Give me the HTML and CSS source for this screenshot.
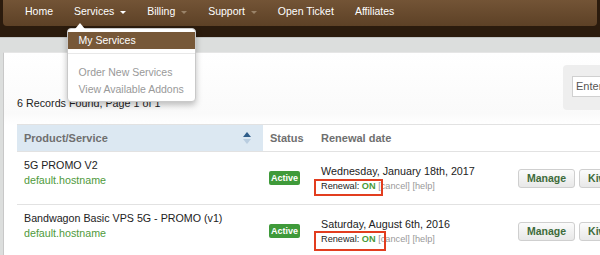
FILE: index.html
```html
<!DOCTYPE html>
<html lang="en">

<head>
    <meta charset="UTF-8">
    <meta name="viewport" content="width=device-width, initial-scale=1.0">
    <title>My Services</title>
    <link rel="stylesheet" href="styles.css">
</head>

<body>
    <div class="header">
        <ul class="navbar">
            <li class="nav-item">Home</li>
            <li class="nav-item open">Services <span class="caret"></span>
                <!-- Services dropdown -->
                <div class="dropdown">
                    <div class="dropdown-item active">My Services</div>
                    <div class="divider"></div>
                    <div class="dropdown-item">Order New Services</div>
                    <div class="dropdown-item">View Available Addons</div>
                </div>
            </li>
            <li class="nav-item">Billing <span class="caret faint"></span></li>
            <li class="nav-item">Support <span class="caret faint"></span></li>
            <li class="nav-item">Open Ticket</li>
            <li class="nav-item">Affiliates</li>
        </ul>
    </div>

    <div class="strip"></div>

    <div class="panel">
        <div class="toolbar">
            <div class="records">6 Records Found, Page 1 of 1</div>
            <div class="search">
                <div class="search-input">Enter</div>
            </div>
        </div>

        <table class="services">
            <thead>
                <tr>
                    <th class="col-product sorted">Product/Service
                        <span class="sort">
                            <svg width="8" height="12" viewBox="0 0 8 12">
                                <path d="M4 0 L8 5 L0 5 Z" fill="#2f5d8a" />
                                <path d="M4 12 L8 7 L0 7 Z" fill="#b9cde0" />
                            </svg>
                        </span>
                    </th>
                    <th class="col-status">Status</th>
                    <th class="col-renewal">Renewal date</th>
                    <th class="col-actions"></th>
                </tr>
            </thead>
            <tbody>
                <tr>
                    <td class="product">
                        <div class="name">5G PROMO V2</div>
                        <div class="host">default.hostname</div>
                    </td>
                    <td class="status"><span class="badge">Active</span></td>
                    <td class="renewal">
                        <div class="date">Wednesday, January 18th, 2017</div>
                        <div class="renew">Renewal: <b>ON</b> <span class="muted">[cancel] [help]</span></div>
                        <div class="mark"></div>
                    </td>
                    <td class="actions">
                        <span class="btn">Manage</span><span class="btn">Kiwi</span>
                    </td>
                </tr>
                <tr>
                    <td class="product">
                        <div class="name">Bandwagon Basic VPS 5G - PROMO (v1)</div>
                        <div class="host">default.hostname</div>
                    </td>
                    <td class="status"><span class="badge">Active</span></td>
                    <td class="renewal">
                        <div class="date">Saturday, August 6th, 2016</div>
                        <div class="renew">Renewal: <b>ON</b> <span class="muted">[cancel] [help]</span></div>
                        <div class="mark wide"></div>
                    </td>
                    <td class="actions">
                        <span class="btn">Manage</span><span class="btn">Kiwi</span>
                    </td>
                </tr>
            </tbody>
        </table>
    </div>
</body>

</html>
```

FILE: styles.css
```css
body {
    margin: 0;
    width: 600px;
    height: 255px;
    overflow: hidden;
    background-color: #dcdedd;
    font-family: "Liberation Sans", Arial, sans-serif;
    color: #222;
}

.header {
    background-color: #2b1b0d;
    padding-bottom: 11px;
}

.navbar {
    display: flex;
    height: 26px;
    margin: 0 3px;
    padding: 0 0 0 11px;
    list-style: none;
    background: linear-gradient(#735436, #5d4126);
    border-radius: 0 0 4px 4px;
}

.nav-item {
    position: relative;
    padding: 0 10.5px;
    line-height: 23px;
    font-size: 10.5px;
    color: #fff;
    white-space: nowrap;
}

.nav-item:first-child {
    padding-left: 11px;
}

.caret {
    display: inline-block;
    margin-left: 3px;
    vertical-align: middle;
    border-top: 3px solid #fff;
    border-left: 3px solid transparent;
    border-right: 3px solid transparent;
}

.caret.faint {
    border-top-color: #9a8369;
}

.dropdown {
    position: absolute;
    top: 28px;
    left: 3px;
    z-index: 2;
    width: 127px;
    height: 69px;
    padding-top: 3px;
    background-color: #fff;
    border: 1px solid #c9c9c9;
    border-radius: 4px;
    box-shadow: 0 3px 6px rgba(0, 0, 0, 0.25);
}

.dropdown::before {
    content: "";
    position: absolute;
    top: -6px;
    left: 7px;
    border-bottom: 6px solid #fff;
    border-left: 5px solid transparent;
    border-right: 5px solid transparent;
}

.dropdown-item {
    padding: 0 11px;
    line-height: 17px;
    color: #999;
    font-size: 10.5px;
}

.dropdown-item.active {
    background-color: #775838;
    color: #fff;
}

.divider {
    height: 1px;
    margin: 4px 0 10px;
    background-color: #e8e8e8;
}

.strip {
    height: 14px;
    border-top: 1px solid #c4c6c5;
}

.panel {
    margin-left: 3px;
    padding-left: 13px;
    background: linear-gradient(#fff, #fafafa 60px, #fff 72px);
    border-left: 1px solid #c8c8c8;
    border-top: 1px solid #e6e6e6;
    height: 203px;
}

.toolbar {
    display: flex;
    align-items: flex-start;
    height: 71px;
}

.records {
    margin-top: 42px;
    font-size: 10.75px;
    line-height: 16px;
}

.search {
    margin: 12px 0 0 auto;
    width: 37px;
    height: 45px;
    padding: 11px 0 0 9px;
    box-sizing: border-box;
    background-color: #eeeeee;
    border-radius: 4px 0 0 4px;
}

.search-input {
    height: 19px;
    padding-left: 3px;
    line-height: 19px;
    font-size: 11px;
    color: #555;
    background-color: #fff;
    border: 1px solid #d0d0d0;
    border-right: none;
}

.services {
    width: 620px;
    border-collapse: collapse;
    table-layout: fixed;
    border-top: 1px solid #e2e2e2;
}

.services th {
    height: 26px;
    padding: 0 0 0 7px;
    text-align: left;
    font-size: 11px;
    color: #6f6f6f;
    border-bottom: 1px solid #e2e2e2;
}

.col-product {
    width: 239px;
    position: relative;
}

.col-status {
    width: 44px;
}

.col-renewal {
    width: 190px;
}

.sorted {
    background-color: #dce8f2;
}

.sort {
    position: absolute;
    right: 12px;
    top: 7px;
}

.services td {
    height: 52px;
    padding: 0 0 0 7px;
    border-bottom: 1px solid #e2e2e2;
    font-size: 10.7px;
}

.product {
    vertical-align: top;
}

.name {
    margin-top: 6px;
    line-height: 15px;
}

.host {
    line-height: 15px;
    color: #4f9a3c;
}

.status {
    padding-left: 6px !important;
}

.badge {
    display: inline-block;
    padding: 0 2px;
    line-height: 14px;
    font-size: 9px;
    font-weight: bold;
    color: #fff;
    background-color: #3f9a3a;
    border-radius: 2px;
}

.renewal {
    position: relative;
}

.date {
    line-height: 16px;
    font-size: 10.75px;
}

.renew {
    font-size: 9.2px;
    line-height: 15px;
}

.renew b {
    color: #4a9a3a;
}

.muted {
    color: #999;
}

.mark {
    position: absolute;
    left: 0;
    bottom: 8px;
    width: 65px;
    height: 13px;
    border: 2px solid #e23d1f;
}

.mark.wide {
    width: 68px;
    height: 16px;
    bottom: 6px;
}

.actions {
    white-space: nowrap;
}

.btn {
    display: inline-block;
    margin-right: 4px;
    padding: 0 8px;
    line-height: 17px;
    font-size: 10.5px;
    font-weight: bold;
    color: #3d6b3a;
    background: linear-gradient(#fbfbfb, #e8e8e8);
    border: 1px solid #cfcfcf;
    border-radius: 3px;
}
```
